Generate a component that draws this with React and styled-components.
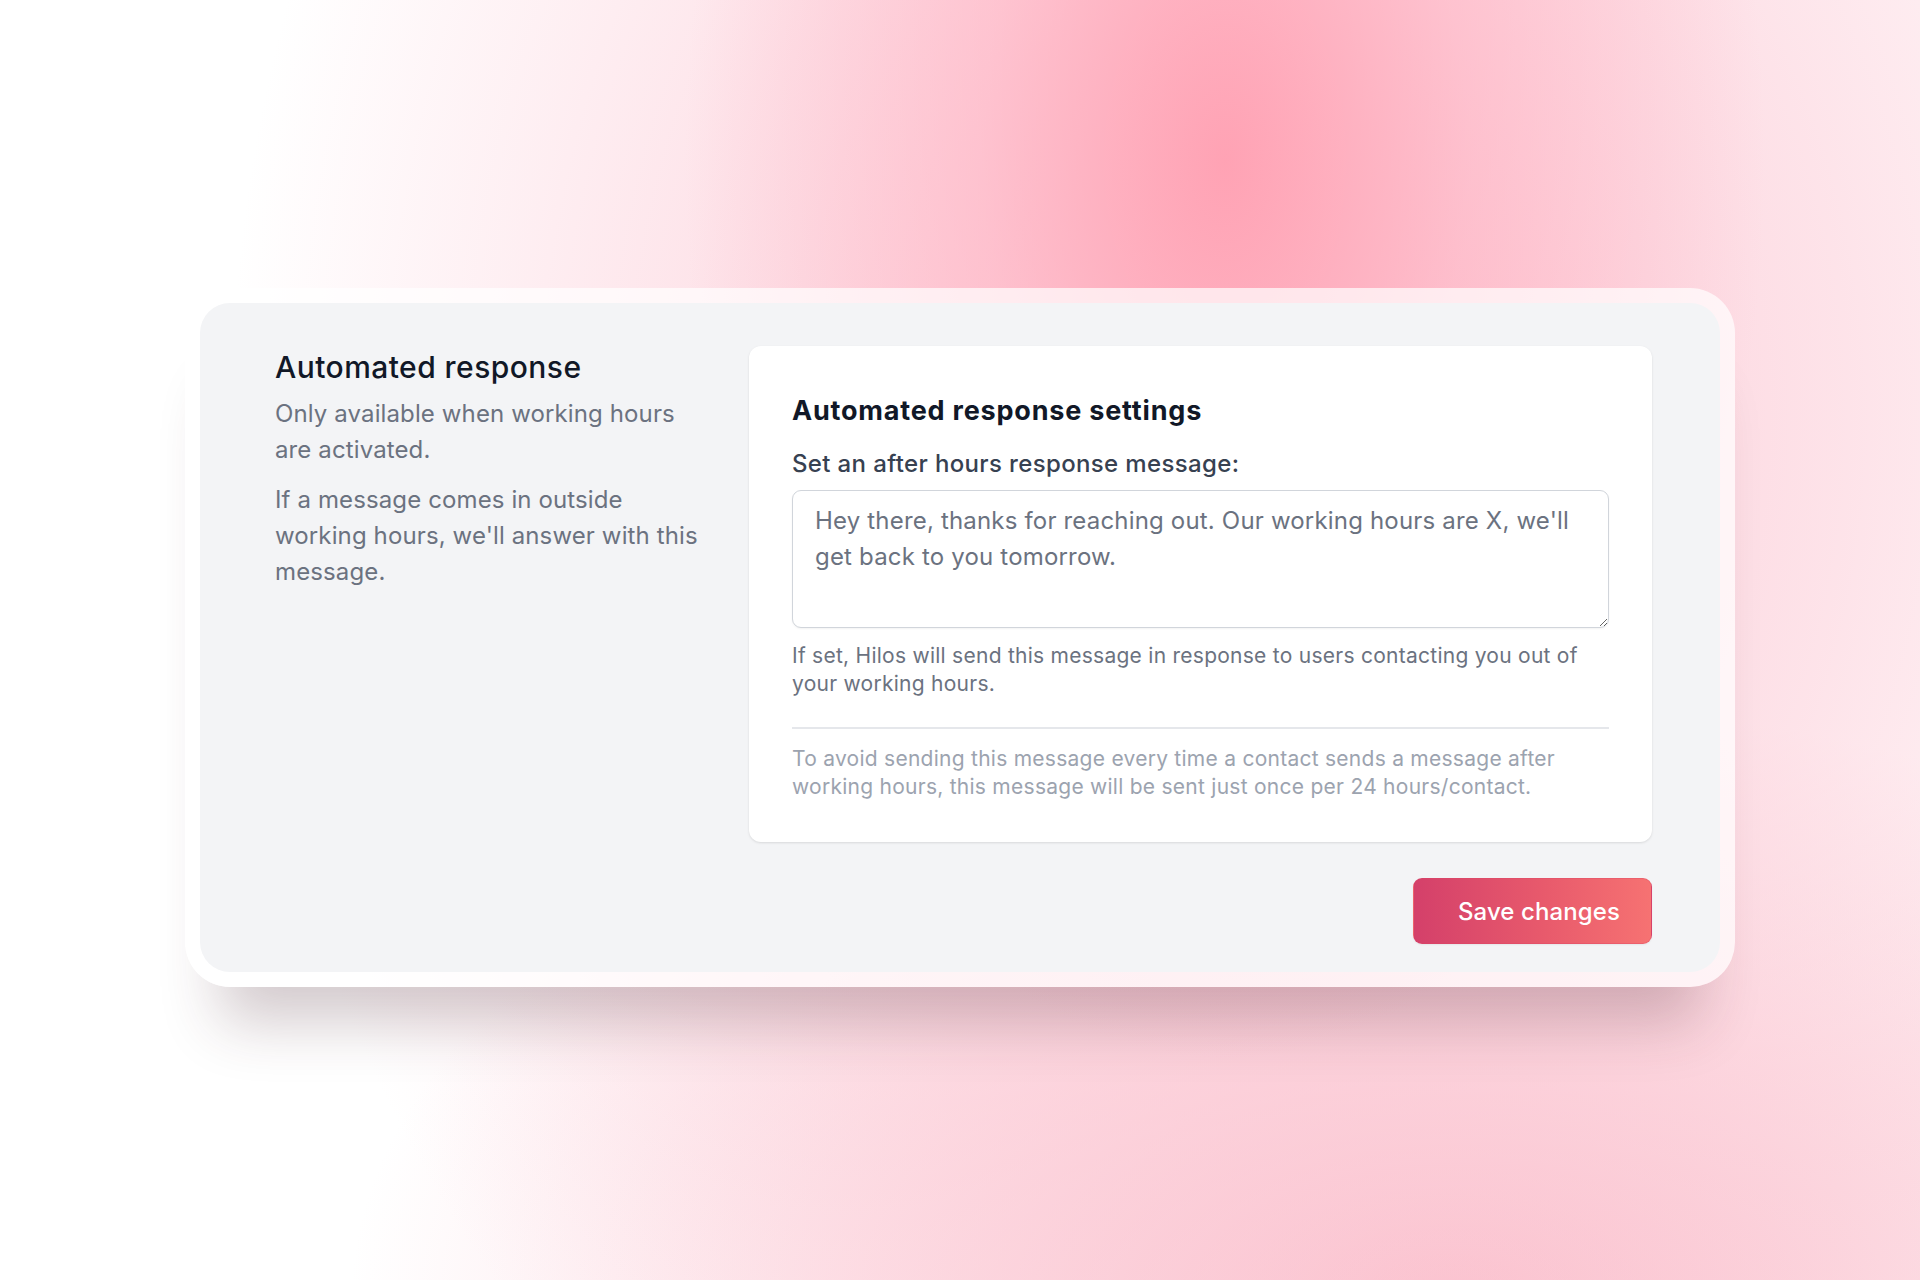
import styled, { createGlobalStyle } from "styled-components";

const GlobalStyle = createGlobalStyle`
  * {
    box-sizing: border-box;
  }
  body {
    margin: 0;
    font-family: Inter, "Noto Sans", sans-serif;
    -webkit-font-smoothing: antialiased;
  }
`;

function App() {
  return (
    <Page>
      <GlobalStyle />
      <Frame>
        <Panel>
          <Columns>
            <Intro>
              <IntroTitle>Automated response</IntroTitle>
              <IntroText>Only available when working hours are activated.</IntroText>
              <IntroText $spaced>
                If a message comes in outside working hours, we'll answer with
                this message.
              </IntroText>
            </Intro>
            <SettingsCard>
              <CardTitle>Automated response settings</CardTitle>
              <FieldLabel htmlFor="after-hours">
                Set an after hours response message:
              </FieldLabel>
              <MessageBox
                id="after-hours"
                defaultValue="Hey there, thanks for reaching out. Our working hours are X, we'll get back to you tomorrow."
              />
              <HelpText>
                If set, Hilos will send this message in response to users
                contacting you out of your working hours.
              </HelpText>
              <Divider />
              <NoteText>
                To avoid sending this message every time a contact sends a
                message after working hours, this message will be sent just once
                per 24 hours/contact.
              </NoteText>
            </SettingsCard>
          </Columns>
          <Actions>
            <SaveButton type="button">Save changes</SaveButton>
          </Actions>
        </Panel>
      </Frame>
    </Page>
  );
}

const Page = styled.div`
  min-height: 1280px;
  padding-bottom: 5px;
  display: flex;
  align-items: center;
  justify-content: center;
  background-color: #ffffff;
  background-image:
    radial-gradient(ellipse 540px 900px at 1225px 160px, rgba(255, 160, 178, 0.95) 0%, rgba(255, 175, 192, 0.55) 45%, rgba(255, 200, 212, 0) 100%),
    radial-gradient(ellipse 1050px 1300px at 1280px 420px, rgba(252, 196, 209, 0.95) 0%, rgba(252, 200, 212, 0.5) 55%, rgba(252, 205, 216, 0) 100%),
    radial-gradient(ellipse 1100px 600px at 1450px 1300px, rgba(250, 192, 205, 1) 0%, rgba(250, 195, 207, 0) 100%);
`;

const Frame = styled.div`
  width: 1550px;
  padding: 15px;
  border-radius: 45px;
  background: rgba(255, 255, 255, 0.7);
  box-shadow: 0 70px 60px -35px rgba(70, 35, 45, 0.24);
`;

const Panel = styled.div`
  background: #f3f4f6;
  border-radius: 30px;
  padding: 43px 68px 28px 75px;
`;

const Columns = styled.div`
  display: grid;
  grid-template-columns: minmax(0, 1fr) 903px;
  column-gap: 36px;
  align-items: start;
`;

const Intro = styled.div`
  min-width: 0;
`;

const IntroTitle = styled.h2`
  margin: 0;
  font-size: 30px;
  line-height: 42px;
  font-weight: 500;
  letter-spacing: 0.45px;
  color: #111827;
`;

const IntroText = styled.p`
  margin: ${(p) => (p.$spaced ? "14px" : "8px")} 0 0;
  font-size: 24px;
  line-height: 36px;
  letter-spacing: 0.12px;
  color: #6b7280;
`;

const SettingsCard = styled.div`
  background: #ffffff;
  border-radius: 12px;
  box-shadow: 0 1px 3px rgba(0, 0, 0, 0.08), 0 1px 2px rgba(0, 0, 0, 0.04);
  padding: 44px 43px 41px;
  display: flex;
  flex-direction: column;
`;

const CardTitle = styled.h3`
  margin: 0;
  font-size: 27px;
  line-height: 42px;
  font-weight: 700;
  letter-spacing: 0.8px;
  color: #111827;
`;

const FieldLabel = styled.label`
  margin-top: 14px;
  font-size: 24px;
  line-height: 36px;
  font-weight: 500;
  letter-spacing: 0.36px;
  color: #374151;
`;

const MessageBox = styled.textarea`
  margin-top: 8px;
  width: 100%;
  height: 138px;
  padding: 12px 22px;
  border: 1.5px solid #d1d5db;
  border-radius: 9px;
  box-shadow: 0 1px 2px rgba(0, 0, 0, 0.05);
  font-family: Inter, "Noto Sans", sans-serif;
  font-size: 24px;
  line-height: 36px;
  letter-spacing: 0.18px;
  color: #6b7280;
  background: #ffffff;
  outline: none;
  resize: vertical;
`;

const HelpText = styled.p`
  margin: 14px 0 0;
  font-size: 21px;
  line-height: 28px;
  letter-spacing: 0.26px;
  color: #6b7280;
`;

const Divider = styled.hr`
  margin: 29px 0 0;
  border: 0;
  border-top: 2px solid #e5e7eb;
`;

const NoteText = styled.p`
  margin: 16px 0 0;
  font-size: 21px;
  line-height: 28px;
  letter-spacing: 0.26px;
  color: #9ca3af;
`;

const Actions = styled.div`
  display: flex;
  justify-content: flex-end;
  margin-top: 36px;
`;

const SaveButton = styled.button`
  height: 66px;
  padding: 0 31px 0 44px;
  border: 1px solid rgba(220, 70, 100, 0.35);
  border-radius: 9px;
  background: linear-gradient(90deg, #d4406a 0%, #e85a6c 55%, #f67272 100%);
  box-shadow: 0 1px 2px rgba(0, 0, 0, 0.06);
  font-family: Inter, "Noto Sans", sans-serif;
  font-size: 24px;
  font-weight: 500;
  letter-spacing: 0.1px;
  color: #ffffff;
  cursor: pointer;
`;

export default App;
